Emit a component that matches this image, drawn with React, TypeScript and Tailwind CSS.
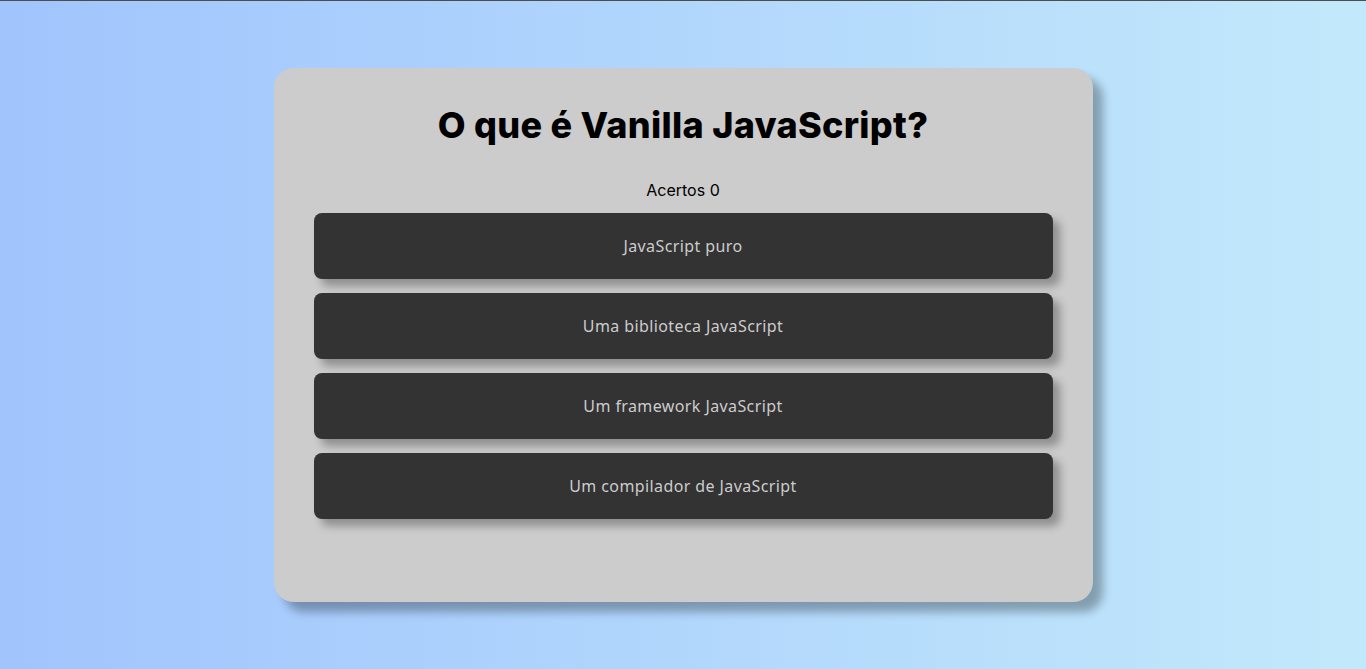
export default function App() {
  const answers = [
    "JavaScript puro",
    "Uma biblioteca JavaScript",
    "Um framework JavaScript",
    "Um compilador de JavaScript",
  ];
  return (
    <div className="min-h-[669px] w-full border-t border-[#4d4d4d] bg-[linear-gradient(to_right,#a1c4fd,#c2e9fb)] pt-[67px] font-['Inter',sans-serif]">
      <div className="mx-auto flex w-[819px] flex-col rounded-[20px] bg-[#cccccc] px-10 pt-[33px] pb-[83px] shadow-[10px_10px_10px_rgba(0,0,0,0.3)]">
        <h1 className="text-center text-[36px] font-extrabold leading-[48px] tracking-[0.3px] text-black">
          O que é Vanilla JavaScript?
        </h1>
        <p className="mt-[31px] text-center text-[16px] leading-[20px] text-black">
          Acertos 0
        </p>
        <div className="mt-[13px] flex flex-col gap-[14px]">
          {answers.map((a) => (
            <button
              key={a}
              className="h-[66px] w-full rounded-[8px] bg-[#333333] text-center font-['Noto_Sans',sans-serif] text-[16px] tracking-[0.4px] text-[#cccccc] shadow-[7px_7px_8px_rgba(0,0,0,0.3)]"
            >
              {a}
            </button>
          ))}
        </div>
      </div>
    </div>
  );
}
